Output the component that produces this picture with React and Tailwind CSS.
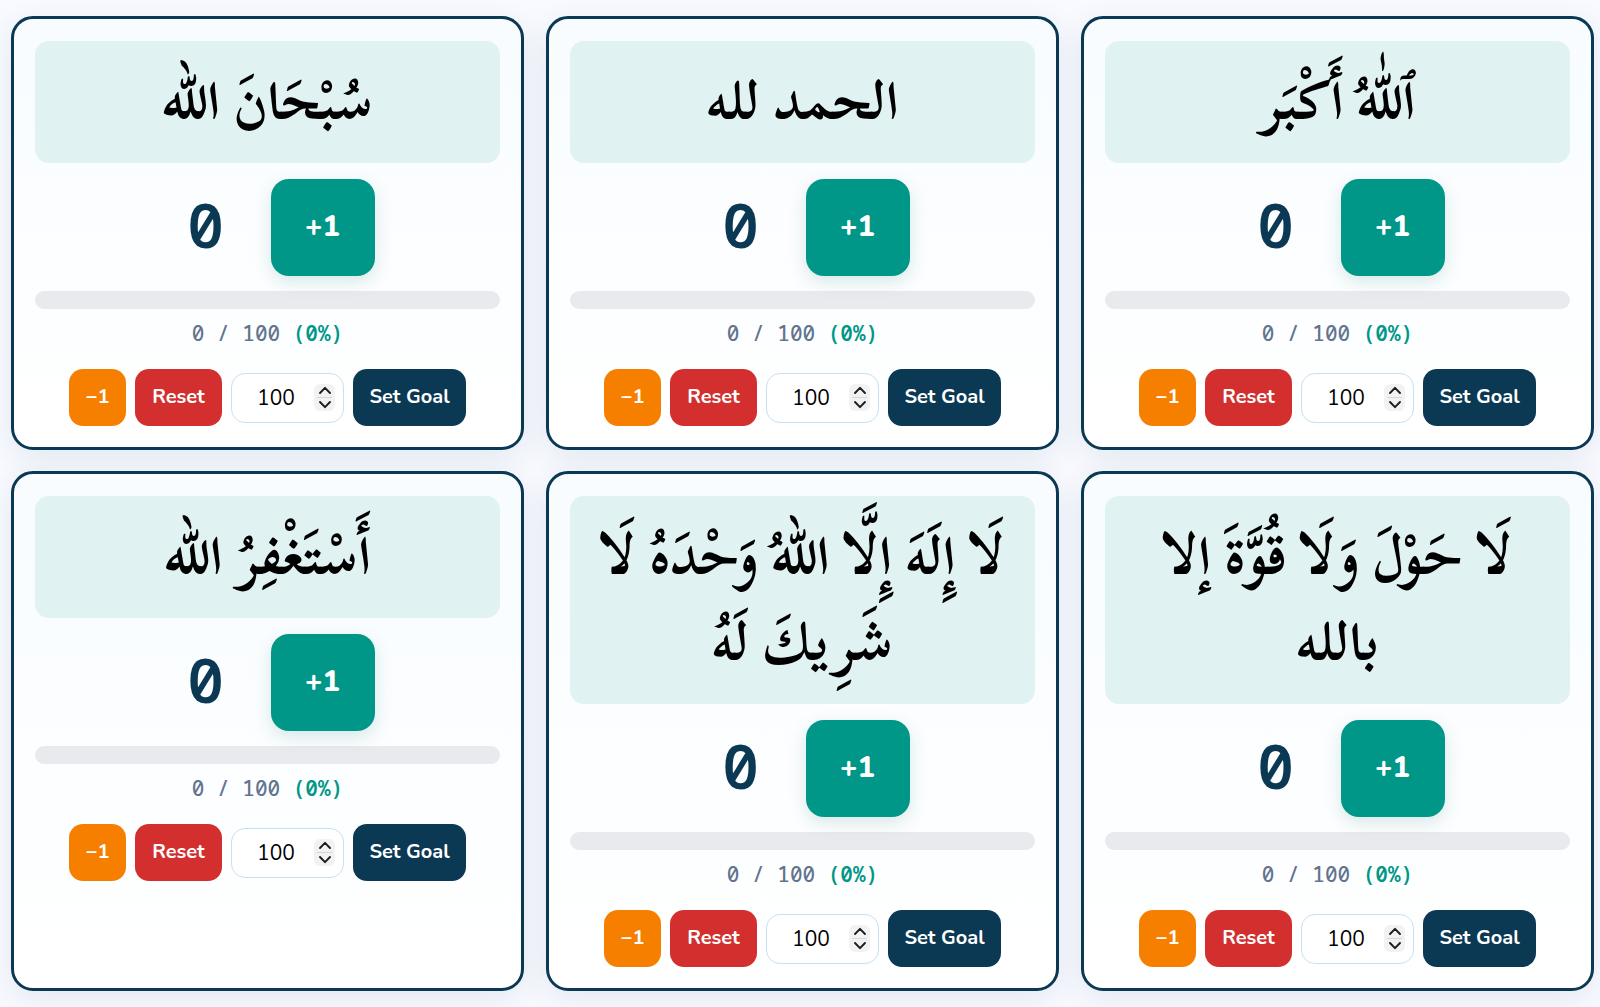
import React, { useState } from "react";

const PHRASES = [
  "سُبْحَانَ الله",
  "الحمد لله",
  "ٱللّٰهُ أَكْبَر",
  "أَسْتَغْفِرُ الله",
  "لَا إِلَهَ إِلَّا اللهُ وَحْدَهُ لَا شَرِيكَ لَهُ",
  "لَا حَوْلَ وَلَا قُوَّةَ إلا بالله",
];

function Chevron({ points }) {
  return (
    <svg
      viewBox="0 0 14 9"
      className="w-3.5 h-[9px]"
      fill="none"
      stroke="#1c1c1c"
      strokeWidth="1.9"
      strokeLinecap="round"
      strokeLinejoin="round"
    >
      <polyline points={points} />
    </svg>
  );
}

function GoalInput({ value, onChange }) {
  const step = (delta) => onChange(Math.max(1, Number(value) + delta));

  return (
    <div className="flex items-center h-[50px] w-[113px] px-2 bg-white border border-[#c6e2f2] rounded-[14px]">
      <input
        aria-label="Goal"
        type="number"
        min="1"
        value={value}
        onChange={(e) => onChange(e.target.value)}
        className="flex-1 min-w-0 h-10 pr-0.5 text-center text-[21px] font-normal text-black bg-transparent outline-none [appearance:textfield] [&::-webkit-inner-spin-button]:appearance-none"
      />
      <div className="flex flex-col items-center justify-center w-[21px] h-[27px] bg-[#f2f2f2] rounded-md">
        <button type="button" aria-label="Increase goal" onClick={() => step(1)}>
          <Chevron points="2,7 7,1.8 12,7" />
        </button>
        <span className="my-0.5 w-[15px] h-px shrink-0 bg-[#d6d6d6]" />
        <button type="button" aria-label="Decrease goal" onClick={() => step(-1)}>
          <Chevron points="2,2 7,7.2 12,2" />
        </button>
      </div>
    </div>
  );
}

function CounterCard({ phrase }) {
  const [count, setCount] = useState(0);
  const [goal, setGoal] = useState(100);
  const [draft, setDraft] = useState(100);

  const percent = Math.min(100, Math.round((count / goal) * 100));

  return (
    <section className="border-3 border-[#0b3954] rounded-[22px] px-[21px] pt-[22px] pb-[21px] bg-linear-to-b from-[#f8fcff] to-white shadow-[0_8px_32px_rgba(11,57,84,0.09)]">
      <h2
        dir="rtl"
        lang="ar"
        className="bg-[#e0f2f1] rounded-[14px] px-5 py-[18px] text-center text-[54px] leading-[86px] font-bold text-black font-['Scheherazade_New','Amiri','DejaVu_Sans',serif]"
      >
        {phrase}
      </h2>

      <div className="flex items-center justify-center gap-5 mt-4">
        <span className="w-[90px] pb-2 text-center text-[62px] leading-none font-semibold text-[#0b3954] font-['Noto_Sans_Mono','Liberation_Mono',monospace]">
          {count}
        </span>
        <button
          type="button"
          onClick={() => setCount(count + 1)}
          className="w-[104px] h-[97px] pb-0.5 rounded-[18px] bg-[#009688] text-white text-[29px] font-extrabold shadow-[0_6px_18px_rgba(0,105,92,0.15)]"
        >
          +1
        </button>
      </div>

      <div className="mt-[15px] h-[18px] rounded-full bg-[#e9eaee] overflow-hidden">
        <div className="h-full bg-[#009688]" style={{ width: `${percent}%` }} />
      </div>

      <p className="mt-2 text-center text-[21px] leading-8 font-medium text-slate-500 font-['Noto_Sans_Mono','Liberation_Mono',monospace]">
        {count} / {goal}{" "}
        <span className="font-semibold text-[#009688]">({percent}%)</span>
      </p>

      <div className="flex items-center justify-center gap-[9px] mt-5 text-xl font-bold text-white">
        <button
          type="button"
          onClick={() => setCount(Math.max(0, count - 1))}
          className="h-[57px] w-[57px] pb-0.5 rounded-[14px] bg-[#f77f00]"
        >
          −1
        </button>
        <button
          type="button"
          onClick={() => setCount(0)}
          className="h-[57px] w-[87px] pb-0.5 rounded-[14px] bg-[#d32f2f]"
        >
          Reset
        </button>
        <GoalInput value={draft} onChange={setDraft} />
        <button
          type="button"
          onClick={() => setGoal(Number(draft) || goal)}
          className="h-[57px] w-[113px] pb-0.5 rounded-[14px] bg-[#0b3954]"
        >
          Set Goal
        </button>
      </div>
    </section>
  );
}

export default function App() {
  return (
    <main className="min-h-screen bg-[#f8faff] pl-[11px] pr-1.5 py-4 font-['Nunito','Lato',sans-serif]">
      <div className="grid grid-cols-3 gap-x-[22px] gap-y-[21px]">
        {PHRASES.map((phrase) => (
          <CounterCard key={phrase} phrase={phrase} />
        ))}
      </div>
    </main>
  );
}
